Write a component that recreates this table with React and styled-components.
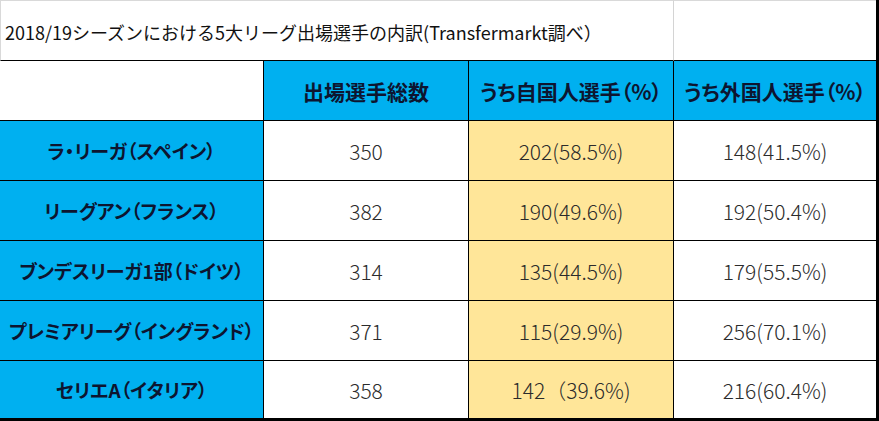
import React from "react";
import styled, { createGlobalStyle, css } from "styled-components";

const Global = createGlobalStyle`
  html, body { margin: 0; padding: 0; background: #ffffff; }
  body { font-family: "Noto Sans CJK JP", "Noto Sans", sans-serif; }
`;

const Sheet = styled.div`
  width: 879px;
  height: 421px;
  box-sizing: border-box;
  display: grid;
  grid-template-columns: 264px 205px 205px 202px;
  grid-template-rows: 61px 60px 60px 60px 60px 60px 57px;
  border-right: 3px solid #000;
  border-bottom: 3px solid #000;
  background: #fff;
`;

const TitleCell = styled.div`
  grid-column: 1 / span 3;
  display: flex;
  align-items: center;
  padding: 3px 0 0 4px;
  box-sizing: border-box;
  border-top: 1px solid #d9d9d9;
  border-left: 1px solid #d9d9d9;
  border-right: 1px solid #d4d4d4;
  border-bottom: 1px solid #000;
  font-family: "Noto Sans CJK JP", sans-serif;
  font-size: 18px;
  letter-spacing: 0;
  color: #111;
  white-space: nowrap;
`;

const BlankTitle = styled.div`
  border-top: 1px solid #d9d9d9;
  border-bottom: 1px solid #000;
`;

const fills = {
  white: "#ffffff",
  blue: "#00b0f0",
  yellow: "#ffe699",
};

const Cell = styled.div`
  box-sizing: border-box;
  display: flex;
  align-items: center;
  justify-content: center;
  white-space: nowrap;
  background: ${(p) => fills[p.$fill || "white"]};
  border-bottom: ${(p) => (p.$last ? "none" : "1px solid #000")};
  border-right: ${(p) => (p.$end ? "none" : "1px solid #000")};
  ${(p) =>
    p.$head
      ? css`
          font-weight: 700;
          font-size: 21px;
          color: #0d1530;
          font-feature-settings: "palt";
        `
      : css`
          font-weight: 300;
          font-size: 21px;
          color: #2b2b2b;
        `}
`;

const LabelCell = styled(Cell)`
  font-size: 19px;
`;

const rows = [
  ["ラ・リーガ（スペイン）", "350", "202(58.5%)", "148(41.5%)"],
  ["リーグアン（フランス）", "382", "190(49.6%)", "192(50.4%)"],
  ["ブンデスリーガ1部（ドイツ）", "314", "135(44.5%)", "179(55.5%)"],
  ["プレミアリーグ（イングランド）", "371", "115(29.9%)", "256(70.1%)"],
  ["セリエA（イタリア）", "358", "142（39.6%)", "216(60.4%)"],
];

export default function App() {
  return (
    <>
      <Global />
      <Sheet>
        <TitleCell>2018/19シーズンにおける5大リーグ出場選手の内訳(Transfermarkt調べ）</TitleCell>
        <BlankTitle />
        <Cell $head $fill="white" />
        <Cell $head $fill="blue">出場選手総数</Cell>
        <Cell $head $fill="blue">うち自国人選手（%）</Cell>
        <Cell $head $fill="blue" $end>うち外国人選手（%）</Cell>
        {rows.map((r, i) => {
          const last = i === rows.length - 1;
          return (
            <React.Fragment key={r[0]}>
              <LabelCell $head $fill="blue" $last={last}>{r[0]}</LabelCell>
              <Cell $last={last}>{r[1]}</Cell>
              <Cell $fill="yellow" $last={last}>{r[2]}</Cell>
              <Cell $end $last={last}>{r[3]}</Cell>
            </React.Fragment>
          );
        })}
      </Sheet>
    </>
  );
}
